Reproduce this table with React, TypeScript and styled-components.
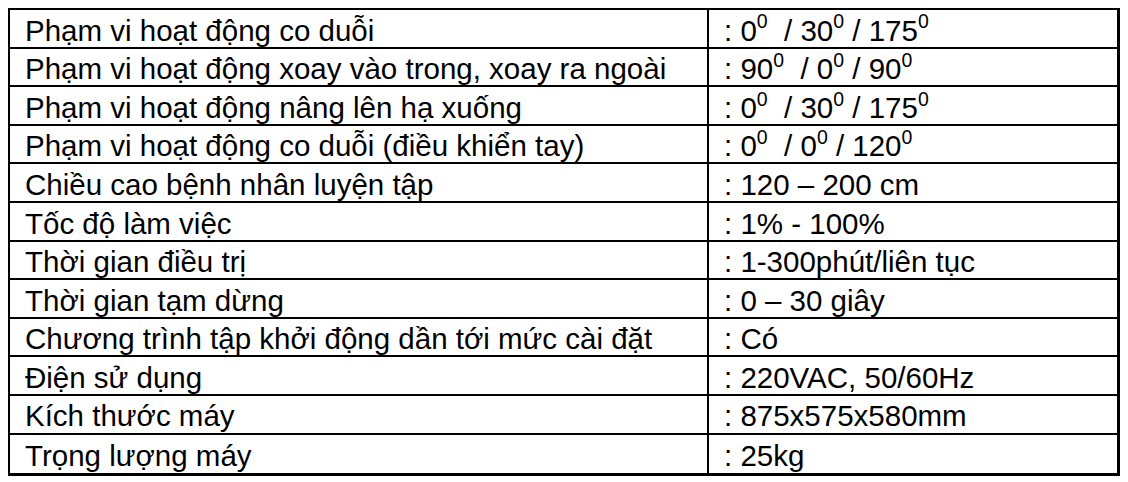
import React from 'react';
import styled, { createGlobalStyle } from 'styled-components';

const GlobalStyle = createGlobalStyle`
  html, body {
    margin: 0;
    padding: 0;
    background: #fff;
  }
  body {
    font-family: "Liberation Sans", Arial, sans-serif;
    color: #000;
  }
`;

type Spec = { label: string; value: React.ReactNode };

const Sup = styled.span`
  font-size: 0.66em;
  position: relative;
  top: -0.42em;
`;

const deg = (n: string) => (
  <>
    {n}
    <Sup>0</Sup>
  </>
);

const specs: Spec[] = [
  { label: 'Phạm vi hoạt động co duỗi', value: <>: {deg('0')}  / {deg('30')} / {deg('175')}</> },
  { label: 'Phạm vi hoạt động xoay vào trong, xoay ra ngoài', value: <>: {deg('90')}  / {deg('0')} / {deg('90')}</> },
  { label: 'Phạm vi hoạt động nâng lên hạ xuống', value: <>: {deg('0')}  / {deg('30')} / {deg('175')}</> },
  { label: 'Phạm vi hoạt động co duỗi (điều khiển tay)', value: <>: {deg('0')}  / {deg('0')} / {deg('120')}</> },
  { label: 'Chiều cao bệnh nhân luyện tập', value: ': 120 – 200 cm' },
  { label: 'Tốc độ làm việc', value: ': 1% - 100%' },
  { label: 'Thời gian điều trị', value: ': 1-300phút/liên tục' },
  { label: 'Thời gian tạm dừng', value: ': 0 – 30 giây' },
  { label: 'Chương trình tập khởi động dần tới mức cài đặt', value: ': Có' },
  { label: 'Điện sử dụng', value: ': 220VAC, 50/60Hz' },
  { label: 'Kích thước máy', value: ': 875x575x580mm' },
  { label: 'Trọng lượng máy', value: ': 25kg' },
];

const Page = styled.div`
  padding: 8px 0 0 8px;
`;

const Table = styled.div`
  width: 1107px;
  border-top: 2px solid #000;
  border-left: 2px solid #000;
  border-right: 3px solid #000;
  border-bottom: 3px solid #000;
`;

const Row = styled.div<{ $last?: boolean }>`
  display: grid;
  grid-template-columns: 699px 1fr;
  height: 38.6px;
  box-sizing: border-box;
  border-bottom: ${p => (p.$last ? 'none' : '2px solid #000')};
`;

const Cell = styled.div<{ $divider?: boolean }>`
  display: flex;
  align-items: center;
  padding: 4px 0 0 15px;
  font-size: 29.5px;
  line-height: 1;
  white-space: pre;
  border-right: ${p => (p.$divider ? '2px solid #000' : 'none')};
`;

export default function App() {
  return (
    <>
      <GlobalStyle />
      <Page>
        <Table>
          {specs.map((s, i) => (
            <Row key={i} $last={i === specs.length - 1}>
              <Cell $divider>{s.label}</Cell>
              <Cell>{s.value}</Cell>
            </Row>
          ))}
        </Table>
      </Page>
    </>
  );
}
